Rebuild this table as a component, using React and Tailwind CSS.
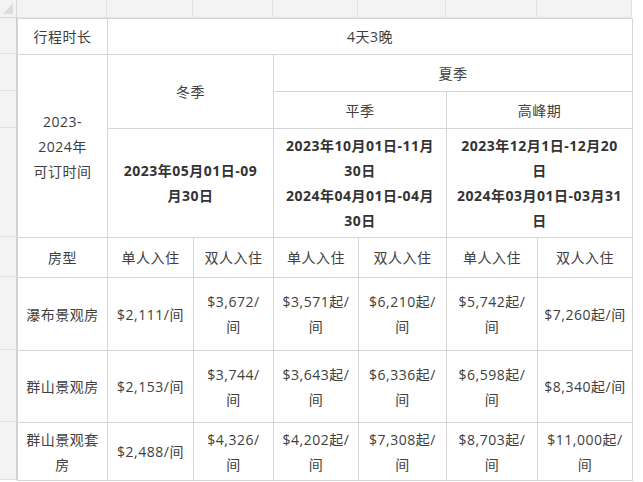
const cols = [90, 86, 80, 85, 88, 91, 95]
const rowHeights = [36, 37, 37, 109, 40, 73, 72, 58]

const cell = "border border-[#d6d6d6] text-center align-middle px-2 leading-[25px]"
const lastCell = "border border-[#d6d6d6] text-center align-middle px-1 leading-[25px]"

const priceRows = [
  ["瀑布景观房", "$2,111/间", "$3,672/间", "$3,571起/间", "$6,210起/间", "$5,742起/间", "$7,260起/间"],
  ["群山景观房", "$2,153/间", "$3,744/间", "$3,643起/间", "$6,336起/间", "$6,598起/间", "$8,340起/间"],
  ["群山景观套房", "$2,488/间", "$4,326/间", "$4,202起/间", "$7,308起/间", "$8,703起/间", "$11,000起/间"],
]

export default function App() {
  return (
    <div
      className="w-[643px] h-[482px] bg-white text-[#404040] text-[14px] tracking-[0.5px] overflow-hidden"
      style={{ fontFamily: '"Open Sans", "Noto Sans CJK SC", sans-serif' }}
    >
      {/* column header strip */}
      <div className="flex h-[18px]">
        <div className="w-[17px] shrink-0 bg-[#f3f3f3] border-r border-b border-[#d8d8d8] flex items-end justify-end p-[3px]">
          <div className="w-[11px] h-[11px] bg-[#dcdcdc] [clip-path:polygon(100%_0,100%_100%,0_100%)]" />
        </div>
        {cols.map((w, i) => (
          <div key={i} style={{ width: w }} className="shrink-0 bg-[#f3f3f3] border-r border-b border-[#e2e2e2]" />
        ))}
      </div>
      <div className="flex">
        {/* row header strip */}
        <div className="w-[17px] shrink-0 flex flex-col">
          {rowHeights.map((h, i) => (
            <div key={i} style={{ height: h }} className="bg-[#f3f3f3] border-r border-b border-r-[#cfcfcf] border-b-[#e2e2e2]" />
          ))}
        </div>
        <table className="table-fixed border-collapse w-[616px]">
          <colgroup>
            {cols.map((w, i) => (
              <col key={i} style={{ width: w }} />
            ))}
          </colgroup>
          <tbody>
            <tr className="h-[36px]">
              <td className={cell}>行程时长</td>
              <td className={cell} colSpan={6}>4天3晚</td>
            </tr>
            <tr className="h-[37px]">
              <td className={cell} rowSpan={3}>
                2023-<br />2024年<br />可订时间
              </td>
              <td className={cell} colSpan={2} rowSpan={2}>冬季</td>
              <td className={cell} colSpan={4}>夏季</td>
            </tr>
            <tr className="h-[37px]">
              <td className={cell} colSpan={2}>平季</td>
              <td className={cell} colSpan={2}>高峰期</td>
            </tr>
            <tr className="h-[109px] font-bold text-[#333]">
              <td className={cell} colSpan={2}>
                2023年05月01日-09<br />月30日
              </td>
              <td className={cell} colSpan={2}>
                2023年10月01日-11月<br />30日<br />2024年04月01日-04月<br />30日
              </td>
              <td className={cell} colSpan={2}>
                2023年12月1日-12月20<br />日<br />2024年03月01日-03月31<br />日
              </td>
            </tr>
            <tr className="h-[40px]">
              <td className={cell}>房型</td>
              <td className={cell}>单人入住</td>
              <td className={cell}>双人入住</td>
              <td className={cell}>单人入住</td>
              <td className={cell}>双人入住</td>
              <td className={cell}>单人入住</td>
              <td className={lastCell}>双人入住</td>
            </tr>
            {priceRows.map((r, i) => (
              <tr key={i} style={{ height: [73, 72, 58][i] }}>
                {r.map((t, j) => (
                  <td key={j} className={j === 6 ? lastCell : cell}>{t}</td>
                ))}
              </tr>
            ))}
          </tbody>
        </table>
      </div>
    </div>
  )
}
